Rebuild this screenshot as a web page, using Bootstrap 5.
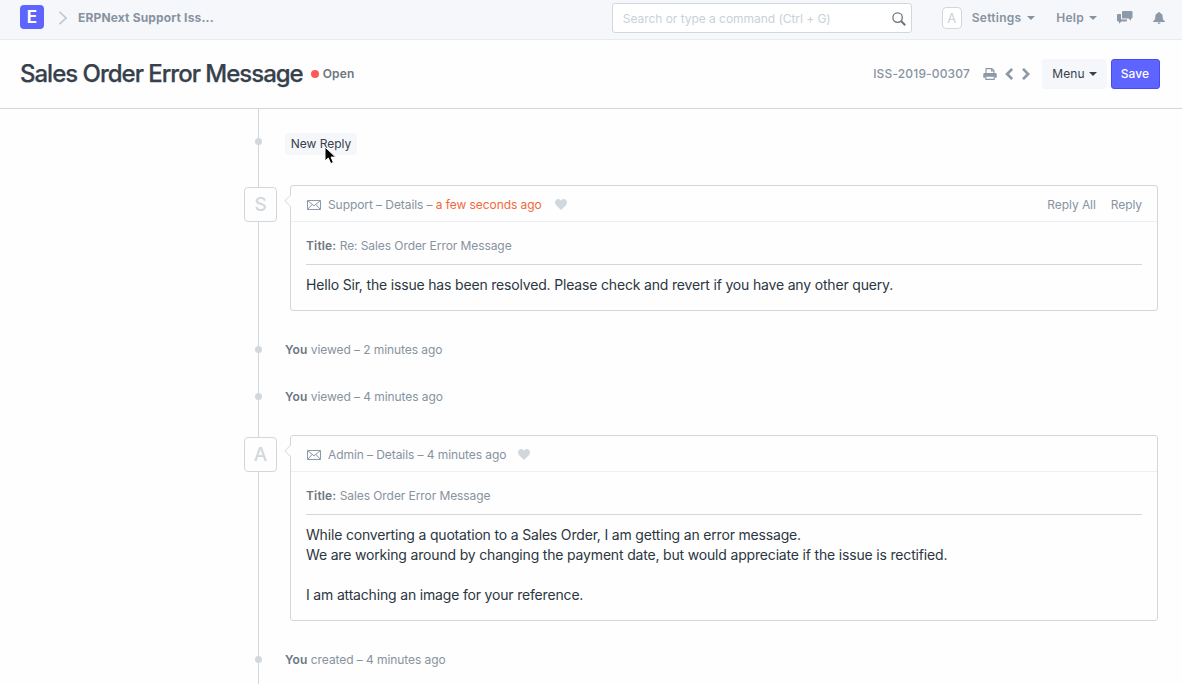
<!DOCTYPE html>
<html lang="en">
<head>
<meta charset="utf-8">
<meta name="viewport" content="width=device-width, initial-scale=1">
<title>Sales Order Error Message</title>
<link href="https://cdn.jsdelivr.net/npm/bootstrap@5.3.0/dist/css/bootstrap.min.css" rel="stylesheet">
<style>
body{font-family:Inter,"Open Sans",sans-serif;font-size:12px;line-height:18px;color:#8793a0;background:#fefefe;height:684px;overflow:hidden;letter-spacing:.16px}
svg{display:block;flex:none}
.topbar{height:40px;background:#f5f7fa;border-bottom:1px solid #e8ecef;padding:0 17px 4px 20px}
.brand-box{width:24px;height:24px;border-radius:4px;background:#5e64ff;color:#fff;font-size:17px;font-weight:700;line-height:24px;text-align:center;letter-spacing:0;margin-top:-2px}
.search-box{width:300px;height:30px;border:1px solid #d1d8dd;border-radius:3px;background:#fff;color:#c9d1d7;padding:2px 5px 0 10px;letter-spacing:-.04px}
.user-box{width:20px;height:22px;border:1px solid #d1d8dd;border-radius:4px;background:#fff;color:#c9d1d7;font-size:13px;line-height:20px;margin-left:30px}
.menu-label{letter-spacing:.25px}
.caret{width:0;height:0;border:4px solid transparent;border-top-color:currentColor;border-bottom:0}
.page-top{height:69px;border-bottom:1px solid #d1d8dd;padding:0 22px 0 20px}
.page-title{font-size:24px;line-height:30px;font-weight:500;color:#36414c;letter-spacing:-1.010px;-webkit-text-stroke:.25px #36414c}
.status-dot{width:8px;height:8px;background:#ff5858;margin-left:8px}
.strong{color:#6c7680;font-weight:600;letter-spacing:.16px}
.tool-btn{height:30px;border-radius:3px;font-size:12px;line-height:18px;padding:0 10px;letter-spacing:.1px}
.btn-menu,.btn-menu:hover{background:#f5f7fa;color:#36414c;width:65px}
.btn-save,.btn-save:hover{background:#5e64ff;border:1px solid #444bff;color:#fff;width:49px;font-weight:500;padding:0 1px 0 0}
.timeline{padding:0 24px 0 258px;height:575px;letter-spacing:-.075px}
.timeline-rail{left:258px;top:0;bottom:0;width:1px;background:#d1d8dd}
.event{position:relative;padding-left:27px;height:18px}
.event::before{content:"";position:absolute;left:-3px;top:5px;width:7px;height:7px;border-radius:50%;background:#d1d8dd}
.reply-btn,.reply-btn:hover{background:#f5f7fa;color:#36414c;height:22px;width:72px;font-size:12px;line-height:20px;border-radius:3px;padding:0;border:0;letter-spacing:-.03px}
.message{position:relative;margin-left:32px}
.bubble{border:1px solid #d1d8dd;border-radius:3px;background:#fefefe}
.bubble-head{height:36px;border-bottom:1px solid #ebeff2;padding:2px 15px 0 16px}
.bubble-by{margin-left:7px}
.bubble-body{padding:15px}
.bubble-title{border-bottom:1px solid #d1d8dd;height:28px;margin-bottom:10px}
.message-text{font-size:14px;line-height:20px;color:#2c3641;letter-spacing:-.175px}
.avatar-box{position:absolute;left:-46px;top:2px;width:33px;height:35px;border:1px solid #d1d8dd;border-radius:4px;background:#fefefe;color:#d1d8dd;font-size:19px;line-height:34px;text-align:center;font-weight:500}
.notch{position:absolute;left:-6px;top:9px}
.pointer{position:absolute;left:66px;top:13px}
.recent{color:#f2683c}
</style>
</head>
<body>
<svg width="0" height="0" class="position-absolute" aria-hidden="true">
  <symbol id="mail" viewBox="0 0 14 10"><path d="M.5.5h13v9H.5zM.8.8 7 5.8 13.2.8M.8 9.2l4.4-4.8M13.2 9.2 8.8 4.4" fill="none" stroke="#8d99a6" stroke-width="1"/></symbol>
  <symbol id="heart" viewBox="0 0 12 11"><path d="M6 11 .9 5.9C-.5 4.300-.2 1.700 1.300.7 2.900-.4 5 .1 6 1.700 7-.1 9.100-.4 10.700.7c1.500 1 1.800 3.600.4 5.200z" fill="#d1d8dd"/></symbol>
  <symbol id="notch-shape" viewBox="0 0 8 14"><path d="M6.500 1v12" stroke="#fefefe" stroke-width="1"/><path d="M7 .8.800 6.800 7 12.800" fill="#fefefe" stroke="#d1d8dd"/></symbol>
</svg>

<header class="topbar d-flex align-items-center">
  <div class="brand-box">E</div>
  <svg style="margin-left:15px" width="8" height="14" viewBox="0 0 8 14" fill="none" stroke="#c0c8ce" stroke-width="1.600"><path d="M.5.8 7 7 .5 13.200"/></svg>
  <div class="fw-bold" style="margin-left:11px">ERPNext Support Iss...</div>
  <div class="search-box d-flex align-items-center justify-content-between ms-auto">
    <span>Search or type a command (Ctrl + G)</span>
    <svg width="14" height="14" viewBox="0 0 14 14" fill="none" stroke="#6c7680"><circle cx="5.600" cy="5.600" r="4.700" stroke-width="1.300"/><path d="m9 9 4.200 4.200" stroke-width="2"/></svg>
  </div>
  <div class="user-box text-center">A</div>
  <div class="menu-label d-flex align-items-center fw-semibold" style="margin-left:10px;gap:6px">Settings <i class="caret"></i></div>
  <div class="menu-label d-flex align-items-center fw-semibold" style="margin-left:21px;gap:5px">Help <i class="caret"></i></div>
  <svg style="margin-left:20px" width="16" height="13" viewBox="0 0 16 13" fill="#8d99a6"><path d="M6 0h8.500q1 0 1 1v5.500q0 1-1 1H14v2.300L11.700 7.500H6q-1 0-1-1V1q0-1 1-1z"/><path d="M1 3h3v4.200q0 1.300 1.300 1.300H10v1q0 1-1 1H4.300L2 12.700v-2.200H1q-1 0-1-1V4q0-1 1-1z"/></svg>
  <svg style="margin-left:20px" width="12" height="12" viewBox="0 0 12 12" fill="#8d99a6"><path d="M5 1a1 1 0 0 1 2 0c2 .5 2.700 2 2.700 4 0 2.200.6 3.200 2.300 4.500v.5H0v-.5C1.700 8.200 2.300 7.200 2.300 5c0-2 .7-3.500 2.700-4zM4.500 10.600h3a1.500 1.300 0 0 1-3 0z"/></svg>
</header>

<section class="page-top d-flex align-items-center">
  <h1 class="page-title m-0">Sales Order Error Message</h1>
  <i class="status-dot rounded-circle"></i>
  <span class="strong" style="margin-left:4px">Open</span>
  <span class="ms-auto fw-medium">ISS-2019-00307</span>
  <svg style="margin-left:13px" width="14" height="12" viewBox="0 0 14 12" fill="none" stroke="#8d99a6" stroke-width="1.100"><path d="M3 5V.6h5.800L11 2.800V5M8.600.8v2.200H11"/><path d="M1.600 5h10.800q1.300 0 1.300 1.300v3.400h-2V8.300H2.300v1.400h-2V6.300Q.3 5 1.600 5z" fill="#8d99a6" stroke="none"/><path d="M2.800 8.200h8.400v3.200H2.800z" fill="#fefefe"/></svg>
  <svg style="margin-left:8px" width="8" height="12" viewBox="0 0 8 12" fill="none" stroke="#8d99a6" stroke-width="2.700"><path d="M7.200.9 2.100 6l5.100 5.100"/></svg>
  <svg style="margin-left:9px" width="8" height="12" viewBox="0 0 8 12" fill="none" stroke="#8d99a6" stroke-width="2.700"><path d="M1 .9 6.100 6 1 11.100"/></svg>
  <button class="btn tool-btn btn-menu border-0 d-flex align-items-center justify-content-center" style="margin-left:12px;gap:4px">Menu <i class="caret"></i></button>
  <button class="btn tool-btn btn-save" style="margin-left:4px">Save</button>
</section>

<main class="timeline position-relative">
  <div class="timeline-rail position-absolute"></div>
  <div style="height:24px"></div>
  <div class="event" style="margin-bottom:34px">
    <button class="btn reply-btn">New Reply</button>
    <svg class="pointer" width="13" height="20" viewBox="0 0 13 20"><path d="M1 1v14l3.300-3 2.500 5.600 2.600-1.200-2.400-5.300h4.700z" fill="#000" stroke="#fff"/></svg>
  </div>

  <article class="message" style="margin-bottom:30px">
    <div class="avatar-box">S</div>
    <div class="bubble">
      <div class="bubble-head d-flex align-items-center">
        <svg width="14" height="10"><use href="#mail"/></svg>
        <span class="bubble-by">Support – Details – <span class="recent">a few seconds ago</span></span>
        <svg style="margin-left:13px" width="12" height="11"><use href="#heart"/></svg>
        <span class="ms-auto">Reply All</span><span style="margin-left:15px">Reply</span>
      </div>
      <div class="bubble-body">
        <div class="bubble-title"><span class="strong">Title:</span> Re: Sales Order Error Message</div>
        <div class="message-text">Hello Sir, the issue has been resolved. Please check and revert if you have any other query.</div>
      </div>
    </div>
    <svg class="notch" width="8" height="14"><use href="#notch-shape"/></svg>
  </article>

  <div class="event" style="margin-bottom:29px"><span class="strong">You</span> viewed – 2 minutes ago</div>
  <div class="event" style="margin-bottom:29px"><span class="strong">You</span> viewed – 4 minutes ago</div>

  <article class="message" style="margin-bottom:30px">
    <div class="avatar-box">A</div>
    <div class="bubble">
      <div class="bubble-head d-flex align-items-center">
        <svg width="14" height="10"><use href="#mail"/></svg>
        <span class="bubble-by">Admin – Details – 4 minutes ago</span>
        <svg style="margin-left:12px" width="12" height="11"><use href="#heart"/></svg>
      </div>
      <div class="bubble-body">
        <div class="bubble-title"><span class="strong">Title:</span> Sales Order Error Message</div>
        <div class="message-text">While converting a quotation to a Sales Order, I am getting an error message.<br>We are working around by changing the payment date, but would appreciate if the issue is rectified.<br><br>I am attaching an image for your reference.</div>
      </div>
    </div>
    <svg class="notch" width="8" height="14"><use href="#notch-shape"/></svg>
  </article>

  <div class="event"><span class="strong">You</span> created – 4 minutes ago</div>
</main>
<script src="https://cdn.jsdelivr.net/npm/bootstrap@5.3.0/dist/js/bootstrap.bundle.min.js"></script>
</body>
</html>
